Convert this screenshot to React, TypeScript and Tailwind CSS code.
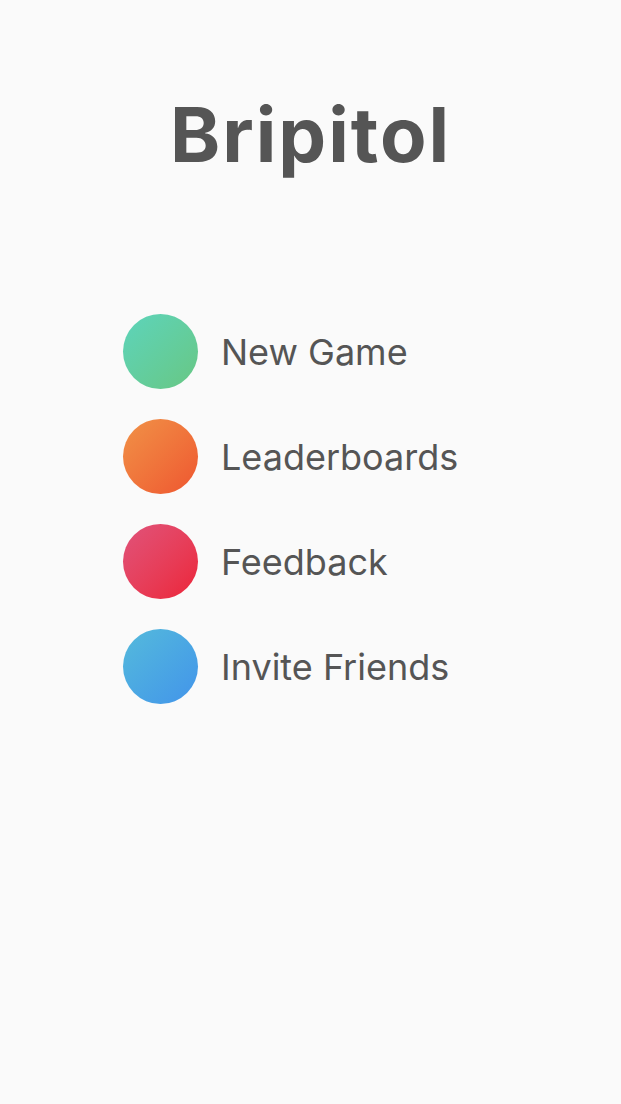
const items = [
  { label: 'New Game', grad: 'bg-gradient-to-br from-[#5dd4bb] to-[#68c783]' },
  { label: 'Leaderboards', grad: 'bg-gradient-to-br from-[#f09147] to-[#ee5530]' },
  { label: 'Feedback', grad: 'bg-gradient-to-br from-[#e0527a] to-[#ec2137]' },
  { label: 'Invite Friends', grad: 'bg-gradient-to-br from-[#55badb] to-[#4394ea]' },
];

export default function App() {
  return (
    <div className="min-h-[1104px] w-full bg-[#fafafa] font-['Inter',sans-serif] text-[#555555]">
      <h1 className="pt-[86px] text-center text-[76px] font-bold leading-[96px] tracking-[2px]">
        Bripitol
      </h1>
      <ul className="mt-[132px] flex flex-col gap-[30px] pl-[123px]">
        {items.map((it) => (
          <li key={it.label} className="flex items-center gap-[23px]">
            <div className={`h-[75px] w-[75px] rounded-full ${it.grad}`} />
            <span className="text-[36px] leading-none">{it.label}</span>
          </li>
        ))}
      </ul>
    </div>
  );
}
